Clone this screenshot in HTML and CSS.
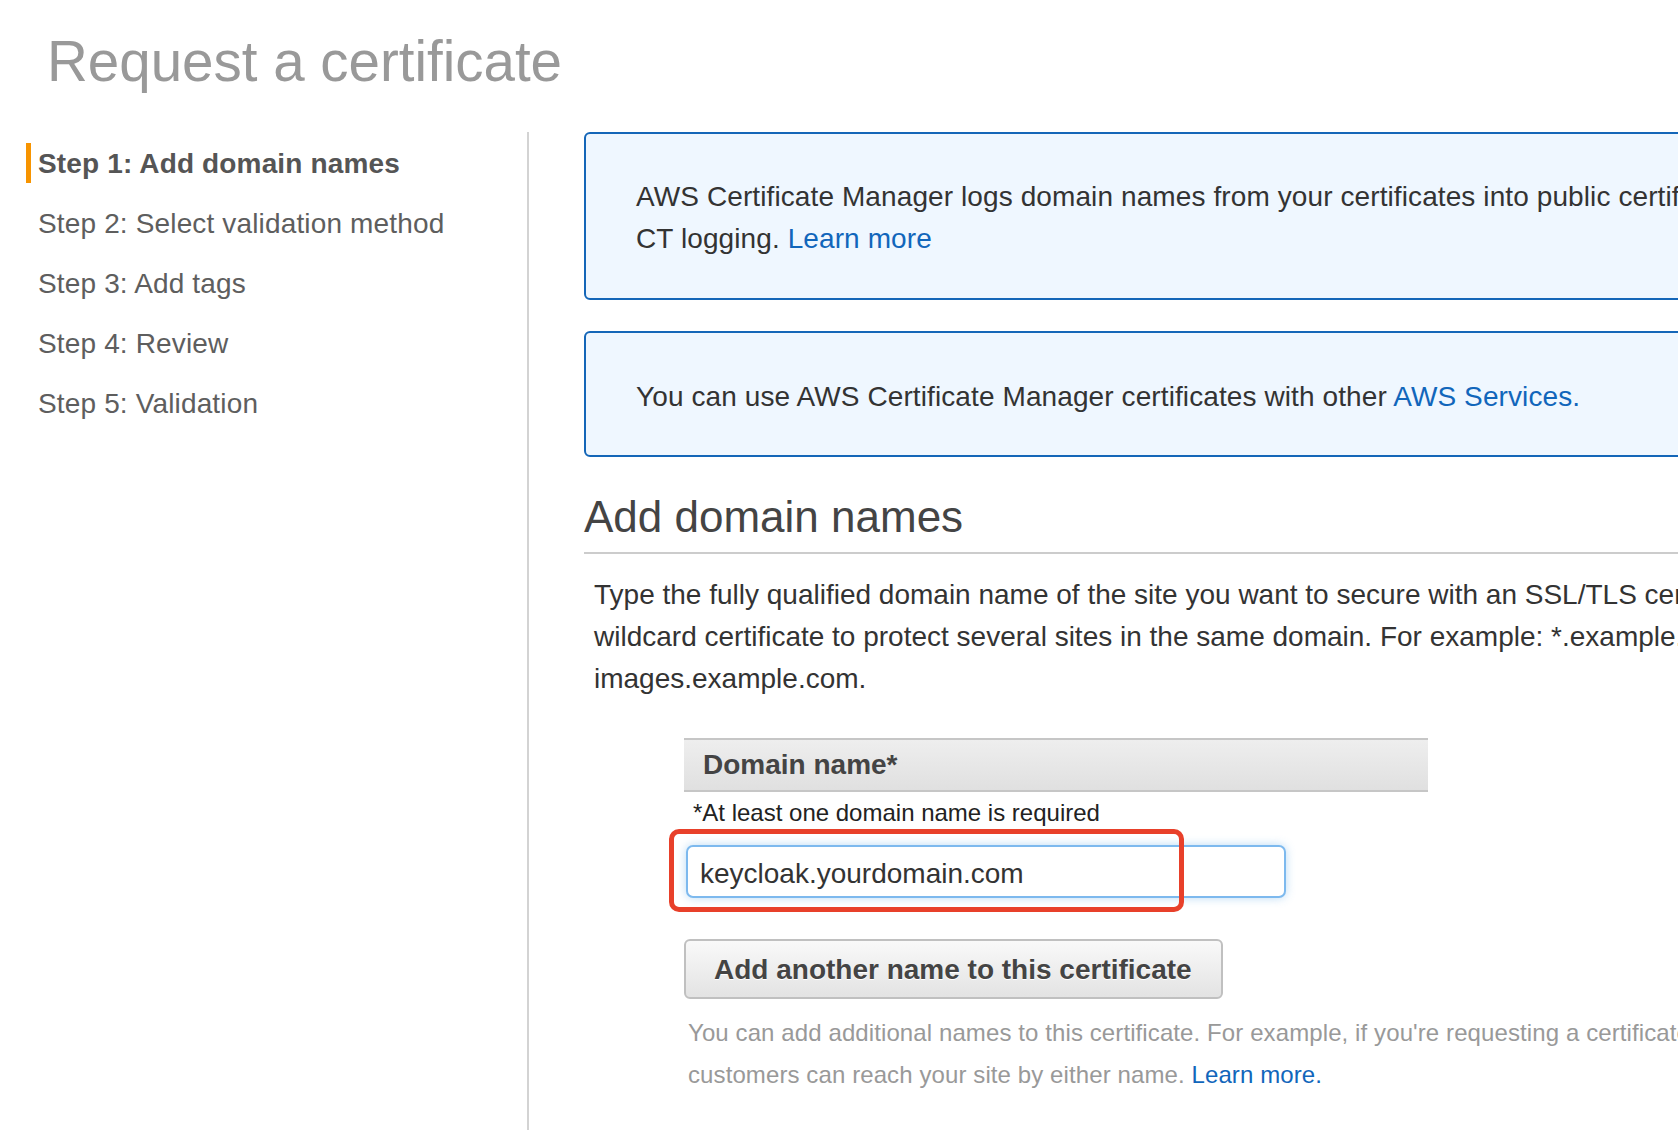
FILE: index.html
```html
<!DOCTYPE html>
<html lang="en">
<head>
<meta charset="utf-8">
<title>Request a certificate</title>
<link rel="stylesheet" href="styles.css">
</head>
<body>
<div class="page">
  <h1 class="page-title">Request a certificate</h1>
  <div class="layout">
    <nav class="steps">
      <ul class="step-list">
        <li class="step step-active">Step 1: Add domain names</li>
        <li class="step">Step 2: Select validation method</li>
        <li class="step">Step 3: Add tags</li>
        <li class="step">Step 4: Review</li>
        <li class="step">Step 5: Validation</li>
      </ul>
    </nav>
    <main class="content">
      <div class="info-box">
        <p class="info-text">AWS Certificate Manager logs domain names from your certificates into public certificate transparency (CT) logs. You can opt out of<br>CT logging. <a class="link" href="#">Learn more</a></p>
      </div>
      <div class="info-box info-box-second">
        <p class="info-text">You can use AWS Certificate Manager certificates with other <a class="link" href="#">AWS Services.</a></p>
      </div>
      <h2 class="section-title">Add domain names</h2>
      <p class="section-desc">Type the fully qualified domain name of the site you want to secure with an SSL/TLS certificate (for example, www.example.com). Use an asterisk (*) to request a<br>wildcard certificate to protect several sites in the same domain. For example: *.example.com protects www.example.com, site.example.com, and<br>images.example.com.</p>
      <div class="domain-form">
        <div class="domain-header">Domain name*</div>
        <div class="domain-note">*At least one domain name is required</div>
        <div class="input-wrap">
          <input class="domain-input" type="text" value="keycloak.yourdomain.com">
          <span class="highlight"></span>
        </div>
        <button class="add-btn" type="button">Add another name to this certificate</button>
        <p class="help-text">You can add additional names to this certificate. For example, if you're requesting a certificate for "www.example.com", you might want to add the name "example.com" so that<br>customers can reach your site by either name. <a class="link" href="#">Learn more.</a></p>
      </div>
    </main>
  </div>
</div>
</body>
</html>
```

FILE: styles.css
```css
html, body {
  margin: 0;
  padding: 0;
  overflow: hidden;
  background: #ffffff;
}

body {
  font-family: "Liberation Sans", Arial, Helvetica, sans-serif;
  color: #333333;
  width: 1678px;
  height: 1130px;
}

.page {
  display: flex;
  flex-direction: column;
}

.page-title {
  margin: 30px 0 38px 47px;
  font-size: 56.5px;
  line-height: 64px;
  font-weight: normal;
  color: #999999;
}

.layout {
  display: flex;
  align-items: stretch;
  min-height: 998px;
}

.steps {
  flex: none;
  width: 527px;
  border-right: 2px solid #d3d3d3;
}

.step-list {
  list-style: none;
  margin: 0;
  padding: 12px 0 0 26px;
}

.step {
  position: relative;
  height: 40px;
  line-height: 40px;
  margin-bottom: 20px;
  padding-left: 12px;
  font-size: 28px;
  letter-spacing: 0.15px;
  color: #5e5e5e;
  white-space: nowrap;
}

.step-active {
  font-weight: bold;
  color: #555555;
}

.step-active::before {
  content: "";
  position: absolute;
  left: 0;
  top: -1px;
  width: 5px;
  height: 40px;
  background: #f79400;
}

.content {
  flex: none;
  width: 1400px;
  padding-left: 55px;
}

.info-box {
  border: 2px solid #1466b8;
  border-radius: 6px;
  background: #eff7ff;
  padding: 42px 50px 38px;
}

.info-box-second {
  margin-top: 31px;
  padding-top: 43px;
  padding-bottom: 37px;
}

.info-text {
  margin: 0;
  font-size: 28px;
  line-height: 42px;
  letter-spacing: 0.1px;
  color: #333333;
  white-space: nowrap;
}

.link {
  color: #1166bb;
  text-decoration: none;
}

.section-title {
  margin: 34px 0 0;
  padding-bottom: 9px;
  border-bottom: 2px solid #cccccc;
  font-size: 44px;
  line-height: 52px;
  font-weight: normal;
  color: #444444;
}

.section-desc {
  margin: 20px 0 0 10px;
  font-size: 28px;
  line-height: 42px;
  color: #333333;
  white-space: nowrap;
}

.domain-form {
  margin: 38px 0 0 100px;
  display: flex;
  flex-direction: column;
  align-items: flex-start;
}

.domain-header {
  box-sizing: border-box;
  width: 744px;
  height: 54px;
  border-top: 2px solid #c6c6c6;
  border-bottom: 2px solid #c6c6c6;
  background: linear-gradient(#eeeeee, #e0e0e0);
  padding-left: 19px;
  font-size: 28px;
  line-height: 50px;
  font-weight: bold;
  color: #444444;
}

.domain-note {
  margin: 3px 0 0 9px;
  font-size: 24px;
  line-height: 36px;
  color: #222222;
}

.input-wrap {
  position: relative;
  margin: 14px 0 0 2px;
}

.domain-input {
  display: block;
  box-sizing: border-box;
  width: 600px;
  height: 53px;
  margin: 0;
  padding: 4px 12px 0;
  border: 2px solid #7db9ee;
  border-radius: 7px;
  box-shadow: 0 0 10px rgba(102, 175, 233, 0.45);
  background: #ffffff;
  font-family: "Liberation Sans", Arial, Helvetica, sans-serif;
  font-size: 28px;
  color: #333333;
  outline: none;
}

.highlight {
  position: absolute;
  left: -17px;
  top: -16px;
  width: 515px;
  height: 83px;
  box-sizing: border-box;
  border: 5px solid #e8402a;
  border-radius: 10px;
  pointer-events: none;
}

.add-btn {
  box-sizing: border-box;
  margin-top: 41px;
  width: 539px;
  height: 60px;
  padding: 2px 0 0 28px;
  text-align: left;
  border: 2px solid #c0c0c0;
  border-radius: 6px;
  background: linear-gradient(#f9f9f9, #e3e3e3);
  font-family: "Liberation Sans", Arial, Helvetica, sans-serif;
  font-size: 28px;
  font-weight: bold;
  color: #444444;
  text-shadow: 0 1px 0 #ffffff;
}

.help-text {
  margin: 13px 0 0 4px;
  font-size: 24px;
  line-height: 42px;
  letter-spacing: 0.1px;
  color: #999999;
  white-space: nowrap;
}
```
